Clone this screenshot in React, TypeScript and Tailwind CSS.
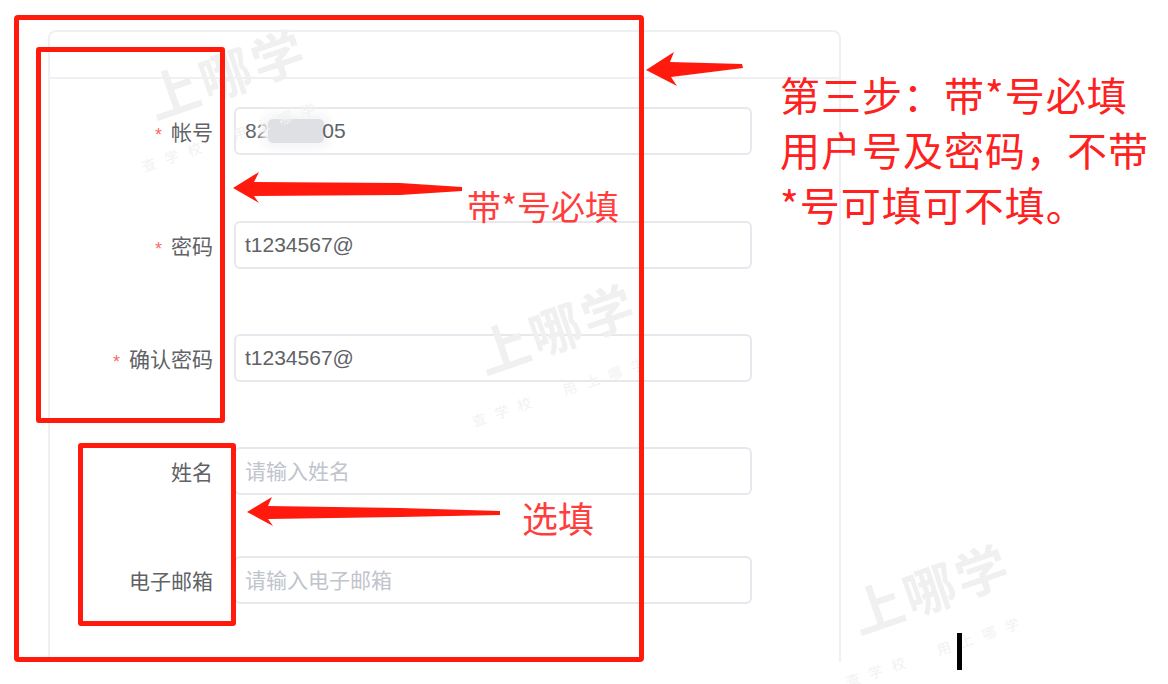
import React from "react";

const FONT = '"Liberation Sans", "Noto Sans CJK SC", sans-serif';
const CJK = '"Noto Sans CJK SC", "Liberation Sans", sans-serif';

function Label({ text, required }: { text: string; required?: boolean }) {
  return (
    <div className="w-[163px] flex justify-end items-center text-[21px] leading-none text-[#606266]" style={{ fontFamily: CJK }}>
      {required && (
        <span className="text-[#f56c6c] text-[18px] leading-none mr-[9px] pt-[7px]" style={{ fontFamily: FONT }}>
          *
        </span>
      )}
      <span>{text}</span>
    </div>
  );
}

function Field({ children }: { children: React.ReactNode }) {
  return (
    <div className="ml-[21px] w-[518px] h-[48px] border-2 border-[#e6e8ed] rounded-[6px] pl-[9px] flex items-center text-[21px] text-[#606266]">
      {children}
    </div>
  );
}

function Watermark({ left, top }: { left: number; top: number }) {
  return (
    <div
      className="absolute w-[260px] flex flex-col items-center -rotate-[19deg] origin-[50%_26px] pointer-events-none"
      style={{ left, top, fontFamily: CJK }}
    >
      <div className="text-[52px] leading-[52px] font-bold tracking-[3px] text-[#f0f0f0]">上哪学</div>
      <div className="mt-[29px] -ml-[28px] text-[14px] leading-[14px] tracking-[10px] text-[#f2f2f2]">查学校　用上哪学</div>
    </div>
  );
}

export default function App() {
  return (
    <div className="relative w-[1168px] h-[684px] overflow-hidden bg-white" style={{ fontFamily: FONT }}>
      {/* form panel */}
      <div className="pt-[30px] pl-[48px]">
        <div className="w-[793px] h-[632px] border-2 border-b-0 border-[#eef0f4] rounded-t-[8px]">
          <div className="h-[47px] border-b-2 border-[#eef0f4]" />
          <div className="flex flex-col">
            <div className="flex items-center mt-[28px]">
              <Label text="帐号" required />
              <Field>
                <span>82</span>
                <span className="inline-block w-[56px] h-[24px] bg-[#dfe0e3] rounded-[5px] shadow-[0_0_10px_6px_#f5f5f7]" />
                <span className="-ml-[2px]">05</span>
              </Field>
            </div>
            <div className="flex items-center mt-[66px]">
              <Label text="密码" required />
              <Field>t1234567@</Field>
            </div>
            <div className="flex items-center mt-[65px]">
              <Label text="确认密码" required />
              <Field>t1234567@</Field>
            </div>
            <div className="flex items-center mt-[65px]">
              <Label text="姓名" />
              <Field>
                <span className="text-[#c0c4cc]" style={{ fontFamily: CJK }}>请输入姓名</span>
              </Field>
            </div>
            <div className="flex items-center mt-[61px]">
              <Label text="电子邮箱" />
              <Field>
                <span className="text-[#c0c4cc]" style={{ fontFamily: CJK }}>请输入电子邮箱</span>
              </Field>
            </div>
          </div>
        </div>
      </div>

      {/* watermarks */}
      <Watermark left={96} top={46} />
      <Watermark left={426} top={301} />
      <Watermark left={800} top={561} />

      {/* annotation boxes */}
      <div className="absolute left-[14px] top-[15px] w-[630px] h-[647px] border-[5px] border-[#ff1a0d] rounded-[4px]" />
      <div className="absolute left-[36px] top-[47px] w-[189px] h-[376px] border-[5px] border-[#ff1a0d] rounded-[3px]" />
      <div className="absolute left-[78px] top-[443px] w-[158px] h-[183px] border-[5px] border-[#ff1a0d] rounded-[3px]" />

      {/* arrows */}
      <svg className="absolute left-0 top-0 pointer-events-none" width="1168" height="684" viewBox="0 0 1168 684">
        <path d="M646 70 L674 52 L670 62 L742 64 L743 68 L671 77 L677 86 Z" fill="#ff1a0d" />
        <path d="M233 188 L259 172 L254 182 L400 183 L462 187 L462 191 L400 195 L254 196 L259 203 Z" fill="#ff1a0d" />
        <path d="M247 512 L272 497 L268 506 L400 508 L500 511 L500 515 L400 517 L268 519 L273 526 Z" fill="#ff1a0d" />
      </svg>

      {/* annotation texts */}
      <div className="absolute left-[467px] top-[189px] text-[34px] leading-none text-[#ff3d3d]" style={{ fontFamily: CJK }}>
        带*号必填
      </div>
      <div className="absolute left-[522px] top-[499px] text-[36px] leading-none text-[#ff3d3d]" style={{ fontFamily: CJK }}>
        选填
      </div>
      <div className="absolute left-[780px] top-[67px] text-[40px] leading-[55px] tracking-[1px] text-[#ff2020]" style={{ fontFamily: CJK }}>
        <div>第三步：带*号必填</div>
        <div>用户号及密码，不带</div>
        <div>*号可填可不填。</div>
      </div>

      {/* text cursor */}
      <div className="absolute left-[957px] top-[633px] w-[5px] h-[37px] bg-black" />
    </div>
  );
}
